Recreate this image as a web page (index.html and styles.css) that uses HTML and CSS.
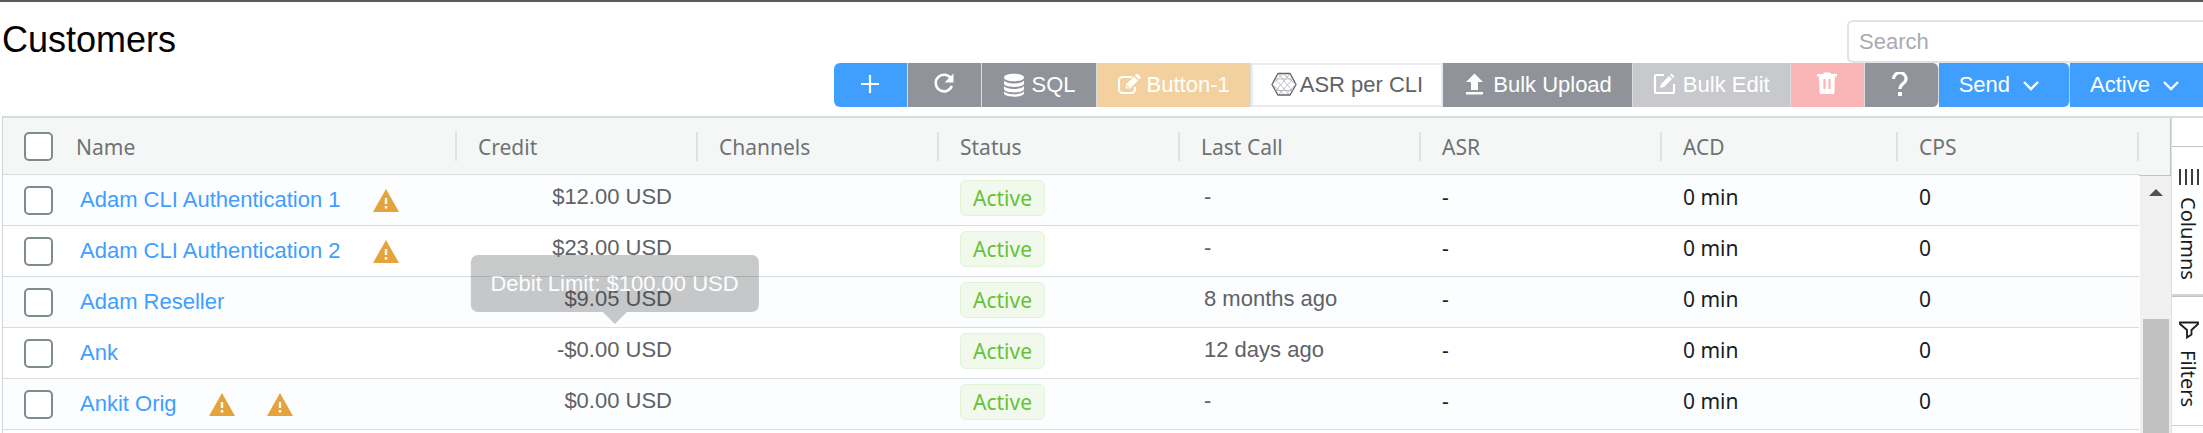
FILE: index.html
```html
<!DOCTYPE html>
<html lang="en">

<head>
    <meta charset="UTF-8">
    <meta name="viewport" content="width=device-width, initial-scale=1.0">
    <title>Customers</title>
    <link rel="stylesheet" href="styles.css">
</head>

<body>
    <svg class="defs" width="0" height="0">
        <symbol id="warning" viewBox="0 0 26 23">
            <path d="M13 0L26 23H0z" fill="#e6a23c" />
            <path d="M11.8 9h2.4v6h-2.4zM11.8 17h2.4v2.6h-2.4z" fill="#fff" />
        </symbol>
        <symbol id="chevron" viewBox="0 0 18 18">
            <path d="M2 6l7 7 7-7" fill="none" stroke="#fff" stroke-width="2.4" />
        </symbol>
    </svg>

    <header class="page-head">
        <h1>Customers</h1>
        <div class="actions">
            <input type="search" class="search" placeholder="Search" aria-label="Search">
            <div class="toolbar">
                <button type="button" class="btn primary first" aria-label="Add">
                    <svg class="icon" viewBox="0 0 26 26"><path d="M13 3v18M4 12h18" fill="none" stroke="#fff" stroke-width="2.2" /></svg>
                </button>
                <button type="button" class="btn info" aria-label="Refresh">
                    <svg class="icon" viewBox="0 0 26 26">
                        <path d="M20 6.500A8.300 8.300 0 1 0 20.800 14" fill="none" stroke="#fff" stroke-width="2.600" />
                        <path d="M22.500 1.500V10.500h-9z" fill="#fff" />
                    </svg>
                </button>
                <button type="button" class="btn info">
                    <svg class="icon small" viewBox="0 0 24 26">
                        <path d="M2 5.500C2 .5 22 .5 22 5.500S2 10.500 2 5.500z" fill="#fff" />
                        <path d="M2 8.500c3 4 17 4 20 0v3c0 4.500-20 4.500-20 0zM2 14c3 4 17 4 20 0v3c0 4.500-20 4.500-20 0zM2 19.300c3 4 17 4 20 0v2c0 4.500-20 4.500-20 0z" fill="#fff" />
                    </svg>
                    SQL
                </button>
                <button type="button" class="btn warning">
                    <svg class="icon small" viewBox="0 0 24 26">
                        <path d="M15 5H5.500A3.500 3.500 0 0 0 2 8.500v9A3.500 3.500 0 0 0 5.500 21h9a3.500 3.500 0 0 0 3.500-3.500V15" fill="none" stroke="#fff" stroke-width="2" />
                        <path d="M9 12.500L17 4.500l4 4-8 8H9zM18 3.500l1.200-1.200a1.300 1.300 0 0 1 1.800 0l2.200 2.200a1.300 1.300 0 0 1 0 1.800L22 7.500z" fill="#fff" />
                        <path d="M10.500 13v2h2" fill="none" stroke="#f3d19e" />
                    </svg>
                    Button-1
                </button>
                <button type="button" class="btn plain">
                    <svg class="icon" viewBox="0 0 26 26">
                        <path d="M7 1.500h12L25 12.500l-6 10.500H7L1 12.500z" fill="none" stroke="#606266" stroke-width="1.300" />
                        <path d="M7 1.500l14 17M19 1.500L5 18.500M1 12.500L12 1.500 25 12.500 14 23zM4 18.500h18M4 7l15 16M22 7L7 23M4 7h18" fill="none" stroke="#999b9f" stroke-width=".6" />
                    </svg>
                    ASR per CLI
                </button>
                <button type="button" class="btn info">
                    <svg class="icon small" viewBox="1 0 24 26"><path d="M12.500 1.500L21 10h-5v8H9v-8H4zM4 20h17v2.400H4z" fill="#fff" /></svg>
                    Bulk Upload
                </button>
                <button type="button" class="btn info-off">
                    <svg class="icon small" viewBox="2 0 24 26">
                        <path d="M13 3H5.500Q4 3 4 4.500v15Q4 21 5.500 21h16q1.500 0 1.500-1.500V12" fill="none" stroke="#fff" stroke-width="2.200" />
                        <path d="M9 16l1-4 8-8 3 3-8 8zM19 3l1.500-1.500 3 3L22 6z" fill="#fff" />
                    </svg>
                    Bulk Edit
                </button>
                <button type="button" class="btn danger-off" aria-label="Delete">
                    <svg class="icon" viewBox="0 0 26 26">
                        <path d="M3 2h6l1-1.500h6L17 2h6v2.400H3zM5 4h16l-.6 16.500Q20.300 22 19 22H7q-1.300 0-1.400-1.500z" fill="#fff" />
                        <path d="M10.500 7v10M15.500 7v10" fill="none" stroke="#fab6b6" stroke-width="2.200" />
                    </svg>
                </button>
                <button type="button" class="btn info last" aria-label="Help">
                    <svg class="icon" viewBox="0 0 26 26">
                        <path d="M5.500 7a6.300 6.300 0 0 1 12.600 0c0 4.500-6.200 4.500-6.200 10" fill="none" stroke="#fff" stroke-width="3.200" />
                        <path d="M10 20h4v4h-4z" fill="#fff" />
                    </svg>
                </button>
                <button type="button" class="btn primary menu">Send <svg class="chevron"><use href="#chevron" /></svg></button>
                <button type="button" class="btn primary menu">Active <svg class="chevron"><use href="#chevron" /></svg></button>
            </div>
        </div>
    </header>

    <main class="grid">
        <table>
            <colgroup>
                <col class="col-check">
                <col class="col-name">
                <col class="col">
                <col class="col">
                <col class="col">
                <col class="col">
                <col class="col">
                <col class="col-acd">
                <col class="col">
            </colgroup>
            <thead>
                <tr>
                    <th class="check"><input type="checkbox" aria-label="Select all"></th>
                    <th class="name-head"><div class="head-cell">Name</div></th>
                    <th><div class="head-cell">Credit</div></th>
                    <th><div class="head-cell">Channels</div></th>
                    <th><div class="head-cell">Status</div></th>
                    <th><div class="head-cell">Last Call</div></th>
                    <th><div class="head-cell">ASR</div></th>
                    <th><div class="head-cell">ACD</div></th>
                    <th><div class="head-cell">CPS</div></th>
                </tr>
            </thead>
            <tbody>
                <tr>
                    <td class="check"><input type="checkbox" aria-label="Select Adam CLI Authentication 1"></td>
                    <td class="name"><div class="name-box"><a href="#">Adam CLI Authentication 1</a><svg class="warn"><use href="#warning" /></svg></div></td>
                    <td class="credit">$12.00 USD</td>
                    <td></td>
                    <td class="status"><span class="tag">Active</span></td>
                    <td class="last-call">-</td>
                    <td>-</td>
                    <td>0 min</td>
                    <td>0</td>
                </tr>
                <tr>
                    <td class="check"><input type="checkbox" aria-label="Select Adam CLI Authentication 2"></td>
                    <td class="name"><div class="name-box"><a href="#">Adam CLI Authentication 2</a><svg class="warn"><use href="#warning" /></svg></div></td>
                    <td class="credit">$23.00 USD</td>
                    <td></td>
                    <td class="status"><span class="tag">Active</span></td>
                    <td class="last-call">-</td>
                    <td>-</td>
                    <td>0 min</td>
                    <td>0</td>
                </tr>
                <tr>
                    <td class="check"><input type="checkbox" aria-label="Select Adam Reseller"></td>
                    <td class="name"><div class="name-box"><a href="#">Adam Reseller</a></div></td>
                    <td class="credit">$9.05 USD</td>
                    <td></td>
                    <td class="status"><span class="tag">Active</span></td>
                    <td class="last-call">8 months ago</td>
                    <td>-</td>
                    <td>0 min</td>
                    <td>0</td>
                </tr>
                <tr>
                    <td class="check"><input type="checkbox" aria-label="Select Ank"></td>
                    <td class="name"><div class="name-box"><a href="#">Ank</a></div></td>
                    <td class="credit"><span class="amount">-$0.00 USD<span class="tooltip" role="tooltip">Debit Limit: $100.00 USD</span></span></td>
                    <td></td>
                    <td class="status"><span class="tag">Active</span></td>
                    <td class="last-call">12 days ago</td>
                    <td>-</td>
                    <td>0 min</td>
                    <td>0</td>
                </tr>
                <tr>
                    <td class="check"><input type="checkbox" aria-label="Select Ankit Orig"></td>
                    <td class="name"><div class="name-box"><a href="#">Ankit Orig</a><svg class="warn"><use href="#warning" /></svg><svg class="warn"><use href="#warning" /></svg></div></td>
                    <td class="credit">$0.00 USD</td>
                    <td></td>
                    <td class="status"><span class="tag">Active</span></td>
                    <td class="last-call">-</td>
                    <td>-</td>
                    <td>0 min</td>
                    <td>0</td>
                </tr>
            </tbody>
        </table>

        <div class="scroll">
            <div class="scroll-head"></div>
            <div class="track">
                <div class="arrow"></div>
                <div class="thumb"></div>
            </div>
        </div>

        <aside class="side-bar">
            <button type="button" class="side-btn">
                <svg class="side-icon" viewBox="0 0 20 18"><path d="M1 1v16M7 1v16M13 1v16M19 1v16" fill="none" stroke="#181d1f" stroke-width="1.700" /></svg>
                Columns
            </button>
            <button type="button" class="side-btn filters">
                <svg class="side-icon" viewBox="0 0 20 18"><path d="M1 1.500h18v1.500l-6.500 6v4.500L8 16.500V9L1 3z" fill="none" stroke="#181d1f" stroke-width="1.800" /></svg>
                Filters
            </button>
        </aside>
    </main>
</body>

</html>
```
FILE: styles.css
```css
* {
    box-sizing: border-box;
}

body {
    margin: 0;
    height: 100vh;
    display: flex;
    flex-direction: column;
    overflow: hidden;
    border-top: 2px solid #545c64;
    background-color: #fff;
    font-family: "Liberation Sans", Arial, sans-serif;
    font-size: 22px;
    color: #606266;
}

.defs {
    position: absolute;
}

/* title, search and toolbar */
.page-head {
    display: flex;
    justify-content: space-between;
    padding: 18px 0 9px 2px;
}

h1 {
    margin: 0;
    font-size: 36px;
    font-weight: normal;
    line-height: 40px;
    color: #000;
}

.actions {
    display: flex;
    flex-direction: column;
    align-items: flex-end;
}

.search {
    width: 356px;
    height: 43px;
    padding: 0 10px;
    border: 2px solid #e0e3ea;
    border-right: none;
    border-radius: 6px 0 0 6px;
    font: inherit;
    background-color: #fff;
}

.search::placeholder {
    color: #a8abb2;
}

.toolbar {
    display: flex;
    margin-right: -7px;
}

.btn {
    height: 44px;
    min-width: 74px;
    padding: 0 20px;
    display: flex;
    justify-content: center;
    align-items: center;
    gap: 6px;
    border: none;
    border-right: 1px solid #dcdde0;
    font: inherit;
    color: #fff;
    white-space: nowrap;
}

.primary {
    background-color: #409eff;
}

.info {
    background-color: #909399;
}

.info-off {
    background-color: #c8c9cc;
}

.warning {
    background-color: #f3d19e;
}

.danger-off {
    background-color: #fab6b6;
}

.plain {
    gap: 3px;
    padding: 0 18px;
    border: 2px solid #e8eaf0;
    background-color: #fff;
    color: #606266;
}

.first {
    border-radius: 6px 0 0 6px;
}

.last {
    border-radius: 0 6px 6px 0;
}

.menu {
    gap: 12px;
    padding-right: 29px;
    border-right: 1px solid #a0cfff;
    border-radius: 0 6px 6px 0;
}

.icon {
    width: 26px;
    height: 26px;
}

.small {
    width: 24px;
}

.chevron {
    width: 18px;
    height: 18px;
}

/* data grid */
.grid {
    flex: 1;
    min-height: 0;
    display: flex;
    align-items: flex-start;
    margin-left: 2px;
    border-top: 2px solid #d9dcde;
    border-left: 1px solid #d0d5d8;
}

table {
    flex: 1;
    width: 100%;
    table-layout: fixed;
    border-spacing: 0;
}

.col-check {
    width: 60px;
}

.col-name {
    width: 394px;
}

.col {
    width: 241px;
}

.col-acd {
    width: 236px;
}

th {
    height: 57px;
    padding: 0 0 0 21px;
    border-bottom: 1px solid #d9dcde;
    background-color: #f5f7f7;
    font-family: "Noto Sans", sans-serif;
    font-size: 21px;
    font-weight: normal;
    text-align: left;
    color: #6f7273;
}

.head-cell {
    height: 29px;
    line-height: 30px;
    border-right: 2px solid #dfe2e5;
}

td {
    height: 51px;
    padding: 0 0 6px 21px;
    border-bottom: 1px solid #d9dcde;
    font-family: "Noto Sans", sans-serif;
    font-size: 21px;
    line-height: 26px;
    color: #181d1f;
}

tbody tr:nth-child(odd) {
    background-color: #fcfdfe;
}

.check {
    padding: 0 0 0 21px;
}

input[type="checkbox"] {
    display: block;
    appearance: none;
    width: 29px;
    height: 29px;
    margin: 0;
    border: 2px solid #7f8c8d;
    border-radius: 5px;
    background-color: #fff;
}

.name-head {
    padding-left: 13px;
}

.name {
    padding: 0 0 0 17px;
}

.name-box {
    display: flex;
    align-items: center;
    font-family: "Liberation Sans", Arial, sans-serif;
    font-size: 22px;
}

.name-box a {
    color: #409eff;
    text-decoration: none;
}

.warn {
    width: 26px;
    height: 23px;
    margin-left: 32px;
}

.credit,
.last-call {
    font-family: "Liberation Sans", Arial, sans-serif;
    font-size: 22px;
    color: #606266;
}

.credit {
    padding-right: 26px;
    text-align: right;
}

.last-call {
    padding-left: 24px;
}

.status {
    padding-bottom: 4px;
}

.tag {
    display: block;
    width: max-content;
    padding: 0 12px;
    border: 1px solid #e1f3d8;
    border-radius: 6px;
    background-color: #f0f9eb;
    line-height: 34px;
    color: #67c23a;
}

.amount {
    position: relative;
}

/* fading out, so the rows below show through */
.tooltip {
    position: absolute;
    left: 50%;
    bottom: calc(100% + 25px);
    transform: translateX(-50%);
    padding: 0 20px;
    border-radius: 7px;
    background-color: #303133;
    line-height: 57px;
    color: #fff;
    white-space: nowrap;
    opacity: 0.26;
}

.tooltip::after {
    content: "";
    position: absolute;
    left: 50%;
    top: 100%;
    margin-left: -12px;
    border: 12px solid transparent;
    border-top-color: #303133;
    border-bottom: none;
}

/* scroll bar */
.scroll {
    width: 32px;
    align-self: stretch;
    display: flex;
    flex-direction: column;
}

.scroll-head {
    height: 58px;
    border-right: 1px solid #bdc3c7;
    border-bottom: 1px solid #bdc3c7;
    background-color: #f5f7f7;
}

.track {
    flex: 1;
    display: flex;
    flex-direction: column;
    align-items: center;
    margin-left: 1px;
    background-color: #f0f0f0;
}

.arrow {
    margin: 13px 0 123px;
    border: 7px solid transparent;
    border-bottom-color: #505050;
    border-top: none;
}

.thumb {
    flex: 1;
    width: 26px;
    background-color: #c1c1c1;
}

/* tool panel tabs */
.side-bar {
    width: 32px;
    align-self: stretch;
    padding-top: 28px;
    border-left: 1px solid #dde0e3;
}

.side-btn {
    width: 100%;
    height: 150px;
    padding: 21px 0 0 2px;
    display: flex;
    align-items: center;
    gap: 11px;
    writing-mode: vertical-rl;
    border: none;
    border-top: 1px solid #bdc3c7;
    border-bottom: 2px solid #cfd4d7;
    background-color: #fff;
    font-family: "Noto Sans", sans-serif;
    font-size: 20px;
    color: #181d1f;
}

.filters {
    height: 130px;
    padding-top: 24px;
    border-bottom-width: 1px;
}

.side-icon {
    width: 20px;
    height: 18px;
}
```
